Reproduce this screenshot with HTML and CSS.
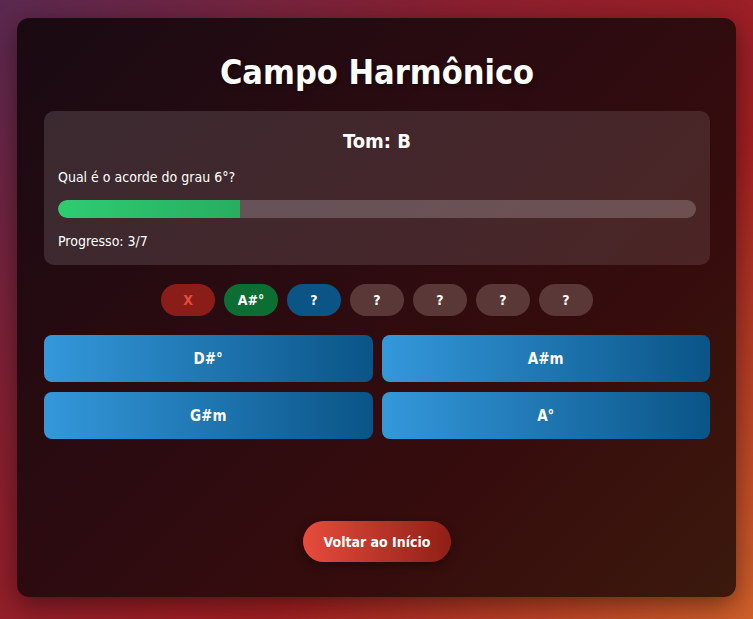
FILE: index.html
```html
<!DOCTYPE html>
<html lang="pt">
<head>
<meta charset="utf-8">
<title>Campo Harmônico</title>
<link rel="stylesheet" href="styles.css">
</head>
<body>
<main class="app">
  <h1 class="title">Campo Harmônico</h1>
  <section class="card">
    <h2 class="key">Tom: B</h2>
    <p class="question">Qual é o acorde do grau 6°?</p>
    <div class="track"><div class="fill" style="width: 28.57%"></div></div>
    <p class="progress">Progresso: 3/7</p>
  </section>
  <div class="chips">
    <span class="chip chip-wrong">X</span>
    <span class="chip chip-right">A#°</span>
    <span class="chip chip-current">?</span>
    <span class="chip">?</span>
    <span class="chip">?</span>
    <span class="chip">?</span>
    <span class="chip">?</span>
  </div>
  <div class="answers">
    <button class="answer">D#°</button>
    <button class="answer">A#m</button>
    <button class="answer">G#m</button>
    <button class="answer">A°</button>
  </div>
  <div class="footer">
    <button class="back">Voltar ao Início</button>
  </div>
</main>
</body>
</html>
```

FILE: styles.css
```css
* { box-sizing: border-box; }
html, body { height: 100%; }
body {
  margin: 0;
  padding: 18px 17px 22px;
  font-family: "DejaVu Sans Condensed", "DejaVu Sans", sans-serif;
  font-stretch: condensed;
  color: #fff;
  background: linear-gradient(135deg, #5a2950 0%, #8c1f2e 35%, #a31f22 65%, #d0602a 100%);
}
.app {
  height: 100%;
  display: flex;
  flex-direction: column;
  padding: 0 26px 35px 27px;
  border-radius: 12px;
  background: linear-gradient(135deg, #190a12 0%, #2c0b10 45%, #360c0c 70%, #3b190c 100%);
  box-shadow: 0 8px 28px rgba(0, 0, 0, 0.45);
}
.title {
  margin: 34px 0 19px;
  text-align: center;
  font-size: 34px;
  font-weight: 700;
  line-height: 40px;
  text-shadow: 2px 2px 4px rgba(0, 0, 0, 0.4);
}
.card {
  padding: 16px 14px 15px;
  border-radius: 10px;
  background: linear-gradient(135deg, rgba(255,255,255,0.13), rgba(255,255,255,0.1));
}
.key {
  margin: 0 0 13px;
  text-align: center;
  font-size: 20px;
  line-height: 28px;
  font-weight: 700;
}
.question {
  margin: 0 0 14px;
  font-size: 14px;
  line-height: 18px;
}
.track {
  height: 18px;
  border-radius: 9px;
  background: rgba(255, 255, 255, 0.2);
  overflow: hidden;
}
.fill {
  height: 100%;
  border-radius: 9px 0 0 9px;
  background: linear-gradient(90deg, #2ecc71, #27ae60);
}
.progress {
  margin: 14px 0 0;
  font-size: 14px;
  line-height: 18px;
}
.chips {
  display: flex;
  justify-content: center;
  gap: 9px;
  margin: 19px 0 19px;
}
.chip {
  width: 54px;
  height: 32px;
  border-radius: 16px;
  display: flex;
  align-items: center;
  justify-content: center;
  font-size: 14px;
  font-weight: 700;
  background: #5a3838;
}
.chip-wrong { background: #8a1d18; color: #e74c3c; }
.chip-right { background: #0d6e34; }
.chip-current { background: #0a5585; }
.answers {
  display: grid;
  grid-template-columns: 1fr 1fr;
  gap: 10px 9px;
}
.answer {
  height: 47px;
  border: 0;
  border-radius: 8px;
  font-family: inherit;
  font-stretch: condensed;
  font-size: 15px;
  font-weight: 700;
  color: #fff;
  background: linear-gradient(90deg, #3498db, #0a5487);
}
.footer {
  margin-top: auto;
  display: flex;
  justify-content: center;
}
.back {
  width: 148px;
  height: 41px;
  border: 0;
  border-radius: 21px;
  font-family: inherit;
  font-stretch: condensed;
  font-size: 14px;
  font-weight: 700;
  color: #fff;
  background: linear-gradient(90deg, #e74c3c, #8f1f16);
  box-shadow: 0 4px 10px rgba(0, 0, 0, 0.35);
}
```
